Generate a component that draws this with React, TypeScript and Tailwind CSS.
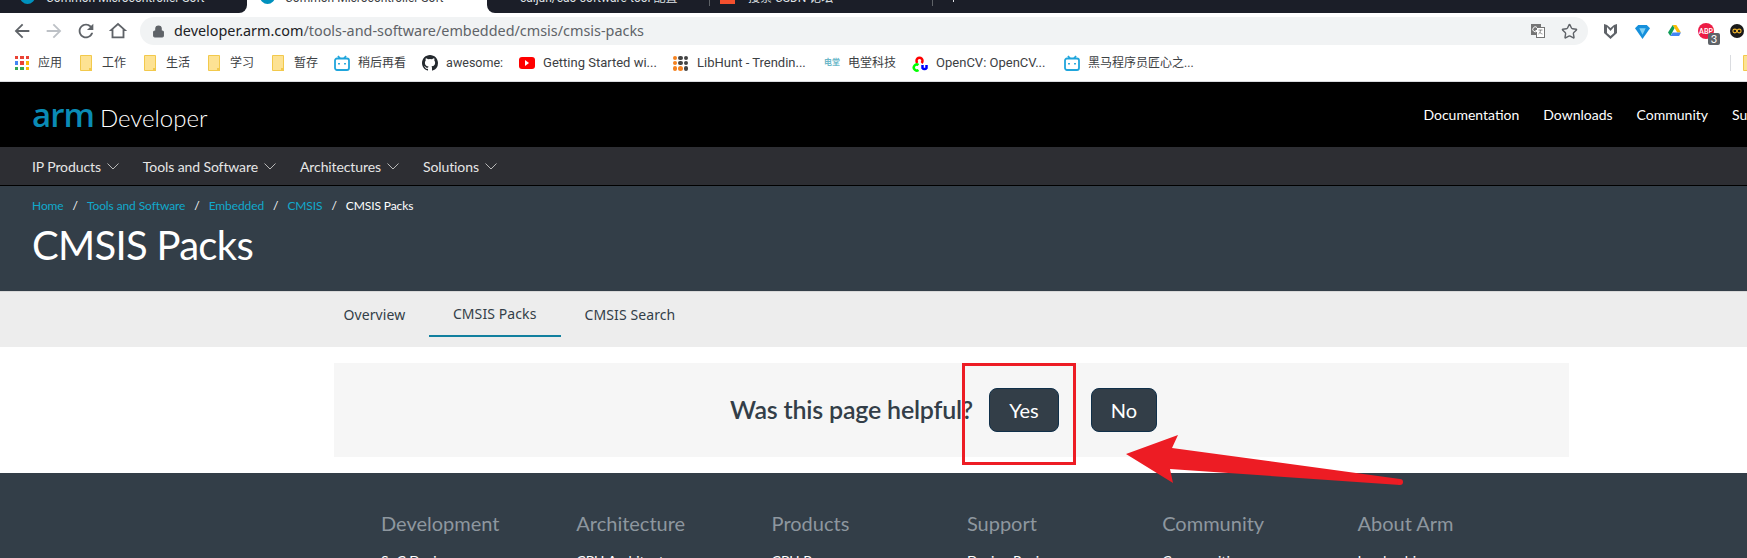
import { Lock, Star } from 'lucide-react'

const sans = { fontFamily: 'Lato, sans-serif' }

const bookmarks = ['工作', '生活', '学习', '暂存']
const mainNav = ['IP Products', 'Tools and Software', 'Architectures', 'Solutions']
const crumbs = ['Home', 'Tools and Software', 'Embedded', 'CMSIS']
const footer = [
  ['Development', 'SoC Design'],
  ['Architecture', 'CPU Architecture'],
  ['Products', 'CPU Processors'],
  ['Support', 'Design Reviews'],
  ['Community', 'Communities'],
  ['About Arm', 'Leadership'],
]

function Folder() {
  return (
    <svg width="12" height="16" viewBox="0 0 12 16">
      <path d="M.5.5h11v15H.5z" fill="#fde293" stroke="#f2c94c" />
      <path d="M9 13h3v3H9z" fill="#f2c94c" />
    </svg>
  )
}

function Bili() {
  return (
    <svg width="16" height="16" viewBox="0 0 16 16" fill="none" stroke="#1fa5dc" strokeWidth="1.8">
      <rect x="1" y="3.500" width="14" height="11.500" rx="2" />
      <path d="M4 1l2 2.500M12 1l-2 2.500" />
      <path d="M5 8v1.500M11 8v1.500" />
    </svg>
  )
}

function Chevron() {
  return (
    <svg width="12" height="7" viewBox="0 0 12 7" fill="none" stroke="#b8b8b8" strokeWidth="1">
      <path d="M.5.5L6 6l5.500-5.500" />
    </svg>
  )
}

function ToolIcon({ d }: { d: string }) {
  return (
    <svg width="22" height="22" viewBox="0 0 24 24" fill="currentColor" fillRule="evenodd">
      <path d={d} />
    </svg>
  )
}

function Tabs() {
  return (
    <div className="flex h-[13px] overflow-hidden bg-white text-[12px] leading-[12px] text-[#dfe1e5]" style={{ fontFamily: 'Roboto, "Noto Sans CJK SC", sans-serif' }}>
      <div className="flex w-[247px] items-start rounded-br-lg bg-[#1b1e28] pl-5">
        <span className="-mt-[11px] h-[15px] w-[15px] shrink-0 rounded-full bg-[#0091bd]" />
        <span className="-mt-[8px] ml-[11px] whitespace-nowrap">Common Microcontroller Soft</span>
      </div>
      <div className="flex w-[240px] items-start pl-[13px] text-[#3c4043]">
        <span className="-mt-[11px] h-[15px] w-[15px] shrink-0 rounded-full bg-[#0091bd]" />
        <span className="-mt-[8px] ml-[10px] whitespace-nowrap">Common Microcontroller Soft</span>
      </div>
      <div className="flex flex-1 items-start rounded-bl-lg bg-[#1b1e28] pl-[33px]">
        <span className="-mt-[8px] w-[189px] whitespace-nowrap">caijun/cao-software-tool 配置</span>
        <span className="h-[6px] w-px bg-[#5f6368]" />
        <span className="ml-[10px] h-[4px] w-[15px] bg-[#f4502e]" />
        <span className="-mt-[8px] ml-[13px] w-[184px] whitespace-nowrap">搜索 CSDN 论坛</span>
        <span className="h-[6px] w-px bg-[#5f6368]" />
        <span className="ml-[20px] h-[2px] w-px bg-[#dfe1e5]" />
      </div>
    </div>
  )
}

function Toolbar() {
  return (
    <div className="flex h-[32px] items-center bg-white pt-[4px]">
      <div className="flex w-[140px] items-center gap-[10px] pl-[11px] text-[#5f6368]">
        <ToolIcon d="M20 11H7.830l5.590-5.590L12 4l-8 8 8 8 1.410-1.410L7.830 13H20v-2z" />
        <span className="text-[#bdc1c6]">
          <ToolIcon d="M12 4l-1.410 1.410L16.170 11H4v2h12.170l-5.580 5.590L12 20l8-8z" />
        </span>
        <ToolIcon d="M17.650 6.350A7.958 7.958 0 0 0 12 4c-4.420 0-7.990 3.580-7.990 8s3.570 8 7.990 8c3.730 0 6.840-2.550 7.730-6h-2.080A5.990 5.990 0 0 1 12 18c-3.310 0-6-2.690-6-6s2.690-6 6-6c1.660 0 3.140.690 4.220 1.780L13 11h7V4l-2.350 2.350z" />
        <ToolIcon d="M12 5.690l5 4.500V18H7v-7.810l5-4.500M12 3L2 12h3v8h14v-8h3L12 3z" />
      </div>
      <div className="flex h-[28px] w-[1448px] items-center rounded-full bg-[#f1f3f4] pl-[12px] pr-[10px]" style={{ fontFamily: '"Noto Sans", sans-serif' }}>
        <Lock size={13} className="fill-[#5f6368] text-[#5f6368]" />
        <span className="ml-[9px] text-[14.400px] text-[#202124]">developer.arm.com</span>
        <span className="text-[14.400px] text-[#5f6368]">/tools-and-software/embedded/cmsis/cmsis-packs</span>
        <svg className="ml-auto" width="14" height="14" viewBox="0 0 14 14">
          <rect x="0" y="0" width="10" height="11" fill="#757575" />
          <rect x="5.500" y="3.500" width="8" height="10" fill="#fff" stroke="#757575" />
          <path d="M7.500 6h4M9.500 6c0 2-1 3.500-2 4M8.500 8c.7 1 1.500 1.500 3 2" fill="none" stroke="#757575" strokeWidth="0.800" />
          <path d="M6 3.500a2.500 2.500 0 1 0 .5 3h-2" fill="none" stroke="#fff" strokeWidth="1" />
        </svg>
        <Star size={17} className="ml-[16px] text-[#5f6368]" />
      </div>
      <div className="ml-[16px] flex items-center">
        <svg width="13" height="16" viewBox="0 0 13 16">
          <path d="M0 1l3 1 3.500 3L10 2l3-1v9l-6.500 6L0 10z" fill="#5f6368" />
          <path d="M3 4l3.500 4L10 4v6l-3.500 3L3 10z" fill="#fff" />
        </svg>
        <svg className="ml-[18px]" width="15" height="15" viewBox="0 0 14 14">
          <path d="M0 4l3-3h8l3 3-7 10z" fill="#1590dc" />
          <path d="M4 4h6l-3 6z" fill="#7fd0f5" />
        </svg>
        <svg className="ml-[18px]" width="13" height="12" viewBox="0 0 14 13">
          <path d="M5 0h4l5 8h-4z" fill="#fbbc04" />
          <path d="M5 0l2 3.500L2.500 12 0 8z" fill="#0f9d58" />
          <path d="M2.500 12L5 8h9l-2 4z" fill="#4285f4" />
        </svg>
        <div className="relative ml-[17px] h-[16px] w-[16px] rounded-full bg-[#ec1c45] text-center text-[7px] font-bold leading-[16px] text-white">
          ABP
          <span className="absolute left-[10px] top-[10px] h-[12px] w-[12px] rounded-[2px] bg-[#5f6368] text-[11px] font-normal leading-[12px]">3</span>
        </div>
        <svg className="ml-[16px]" width="14" height="14" viewBox="0 0 14 14">
          <circle cx="7" cy="7" r="7" fill="#1a1a1a" />
          <circle cx="4.800" cy="7" r="1.900" fill="none" stroke="#f5b92e" strokeWidth="1.100" />
          <circle cx="9.200" cy="7" r="1.900" fill="none" stroke="#f5b92e" strokeWidth="1.100" />
        </svg>
      </div>
    </div>
  )
}

function Bookmarks() {
  return (
    <div className="flex h-[37px] items-center overflow-hidden border-b border-[#dadce0] bg-white pl-[15px] text-[12px] text-[#3c4043]" style={{ fontFamily: 'Roboto, "Noto Sans CJK SC", sans-serif' }}>
      <div className="grid h-[14px] w-[14px] shrink-0 grid-cols-3 gap-[2px]">
        <i className="bg-[#ea4335]" />
        <i className="bg-[#ea4335]" />
        <i className="bg-[#ea4335]" />
        <i className="bg-[#4285f4]" />
        <i className="bg-[#ea4335]" />
        <i className="bg-[#fbbc04]" />
        <i className="bg-[#34a853]" />
        <i className="bg-[#34a853]" />
        <i className="bg-[#fbbc04]" />
      </div>
      <span className="ml-[9px] mr-[18px] w-[24px] shrink-0">应用</span>
      {bookmarks.map((b) => (
        <div key={b} className="mr-[18px] flex shrink-0 items-center gap-[10px]">
          <Folder />
          <span>{b}</span>
        </div>
      ))}
      <div className="-ml-[2px] flex items-center gap-[8px]">
        <Bili />
        <span>稍后再看</span>
      </div>
      <svg className="ml-[16px]" width="16" height="16" viewBox="0 0 16 16" fill="#24292e">
        <path d="M8 0C3.580 0 0 3.580 0 8c0 3.540 2.290 6.530 5.470 7.590.4.070.55-.17.55-.38v-1.340c-2.230.48-2.690-1.070-2.690-1.070-.36-.92-.89-1.170-.89-1.170-.73-.5.050-.49.050-.49.800.060 1.230.830 1.230.830.710 1.220 1.870.870 2.330.660.070-.52.280-.870.510-1.070-1.780-.2-3.640-.89-3.640-3.950 0-.870.310-1.590.820-2.150-.080-.2-.360-1.020.080-2.120 0 0 .670-.210 2.200.820a7.600 7.600 0 0 1 4 0c1.530-1.040 2.200-.820 2.200-.820.440 1.100.160 1.920.080 2.120.510.560.820 1.270.820 2.150 0 3.070-1.870 3.750-3.650 3.950.290.250.540.730.540 1.480v2.190c0 .210.150.460.550.380A8.010 8.010 0 0 0 16 8c0-4.420-3.580-8-8-8z" />
      </svg>
      <span className="ml-[8px] mr-[16px] w-[57px] text-[12.500px]">awesome:</span>
      <span className="flex h-[12px] w-[16px] items-center justify-center rounded-[3px] bg-[#ff0000]">
        <span className="h-0 w-0 border-y-[3px] border-l-[4px] border-y-transparent border-l-white" />
      </span>
      <span className="ml-[8px] mr-[16px] w-[114px] text-[13px]">Getting Started wi...</span>
      <div className="grid h-[15px] w-[15px] grid-cols-3 gap-[1px]">
        <i className="rounded-full bg-[#f58220]" />
        <i className="rounded-full bg-[#444]" />
        <i className="rounded-full bg-[#444]" />
        <i className="rounded-full bg-[#f58220]" />
        <i className="rounded-full bg-[#444]" />
        <i className="rounded-full bg-[#444]" />
        <i className="rounded-full bg-[#f58220]" />
        <i className="rounded-full bg-[#f58220]" />
        <i className="rounded-full bg-[#444]" />
      </div>
      <span className="ml-[9px] mr-[17px] w-[110px] text-[13px]">LibHunt - Trendin...</span>
      <span className="w-[16px] text-[8px] font-bold leading-none text-[#6bb8c9]">电堂</span>
      <span className="ml-[8px] mr-[15px] w-[49px]">电堂科技</span>
      <svg width="16" height="17" viewBox="0 0 15 17" fill="none" strokeWidth="2.500">
        <path d="M5 8a3 3 0 1 1 4 0" stroke="#f00" />
        <path d="M6 10a3 3 0 1 0 0 5" stroke="#0f0" />
        <path d="M10 10v3a2.500 2.500 0 0 0 4 0v-3" stroke="#00f" />
      </svg>
      <span className="ml-[8px] mr-[17px] w-[111px] text-[13px]">OpenCV: OpenCV...</span>
      <Bili />
      <span className="ml-[8px]">黑马程序员匠心之...</span>
      <span className="ml-auto h-[16px] w-px bg-[#dadce0]" />
      <div className="-mr-[8px] ml-[12px]">
        <Folder />
      </div>
    </div>
  )
}

export default function App() {
  return (
    <div className="relative h-[558px] w-[1747px] overflow-hidden bg-white" style={sans}>
      <Tabs />
      <Toolbar />
      <Bookmarks />

      <header className="flex h-[65px] items-center justify-between overflow-hidden bg-black pl-[32px] text-white">
        <div className="flex items-baseline gap-[6px]">
          <span className="text-[33px] font-semibold leading-none tracking-[-1px] text-[#0a8bb5]" style={{ fontFamily: '"Open Sans", sans-serif' }}>arm</span>
          <span className="text-[24px] font-light leading-none">Developer</span>
        </div>
        <nav className="flex gap-[24px] text-[14px]">
          <span>Documentation</span>
          <span>Downloads</span>
          <span>Community</span>
          <span className="w-[15px] overflow-hidden">Support</span>
        </nav>
      </header>

      <nav className="flex h-[39px] items-center gap-[24px] border-b border-black bg-[#2d2e33] pl-[32px] text-[14px] tracking-[-0.1px] text-[#e6e6e6]">
        {mainNav.map((n) => (
          <span key={n} className="flex items-center gap-[6px]">
            {n}
            <Chevron />
          </span>
        ))}
      </nav>

      <section className="h-[105px] bg-[#333e48] pl-[32px] pt-[12px] text-white">
        <div className="flex items-center gap-[9px] text-[12px] leading-[16px] tracking-[-0.1px]">
          {crumbs.map((c) => (
            <span key={c} className="flex gap-[9px]">
              <span className="text-[#11a9cc]">{c}</span>
              <span>/</span>
            </span>
          ))}
          <span>CMSIS Packs</span>
        </div>
        <h1 className="mt-[7px] text-[40px] leading-[48px] tracking-[-0.7px]">CMSIS Packs</h1>
      </section>

      <div className="flex h-[56px] border-t border-[#d9d9d9] bg-[#ededed] pl-[320px] text-[14px] tracking-[0.1px] text-[#333e48]" style={{ fontFamily: '"Noto Sans", sans-serif' }}>
        <span className="flex h-[45px] items-center px-[23.500px]">Overview</span>
        <span className="flex h-[45px] items-center border-b-2 border-[#11809f] px-[24px]">CMSIS Packs</span>
        <span className="flex h-[45px] items-center px-[24px]">CMSIS Search</span>
      </div>

      <div className="pl-[334px] pr-[178px] pt-[16px]">
        <div className="flex h-[94px] items-center justify-center gap-[16px] bg-[#f6f6f6] pr-[16px]">
          <span className="text-[25px] font-semibold tracking-[-0.2px] text-[#333e48]">Was this page helpful?</span>
          <button className="h-[44px] w-[70px] rounded-lg border border-[#10304a] bg-[#333e48] text-[20px] text-white">Yes</button>
          <button className="ml-[16px] h-[44px] w-[66px] rounded-lg border border-[#10304a] bg-[#333e48] text-[20px] text-white">No</button>
        </div>
      </div>

      <footer className="mt-[16px] grid h-[85px] grid-cols-[repeat(6,195.300px)] overflow-hidden bg-[#333e48] pl-[381px] pt-[38px]">
        {footer.map(([title, link]) => (
          <div key={title}>
            <div className="text-[20px] leading-[24px] text-[#8e979f]">{title}</div>
            <div className="mt-[15px] text-[14px] text-white">{link}</div>
          </div>
        ))}
      </footer>

      {/* annotation drawn on top of the screenshot */}
      <div className="absolute left-[962px] top-[363px] h-[102px] w-[114px] border-[3px] border-[#ed1c24]" />
      <svg className="absolute left-[1120px] top-[430px]" width="290" height="60" viewBox="0 0 290 60">
        <path d="M6 24L58 5 52 18 280 49 280 55 50 39 53 53z" fill="#ed1c24" />
        <circle cx="280" cy="52" r="3" fill="#ed1c24" />
      </svg>
    </div>
  )
}
